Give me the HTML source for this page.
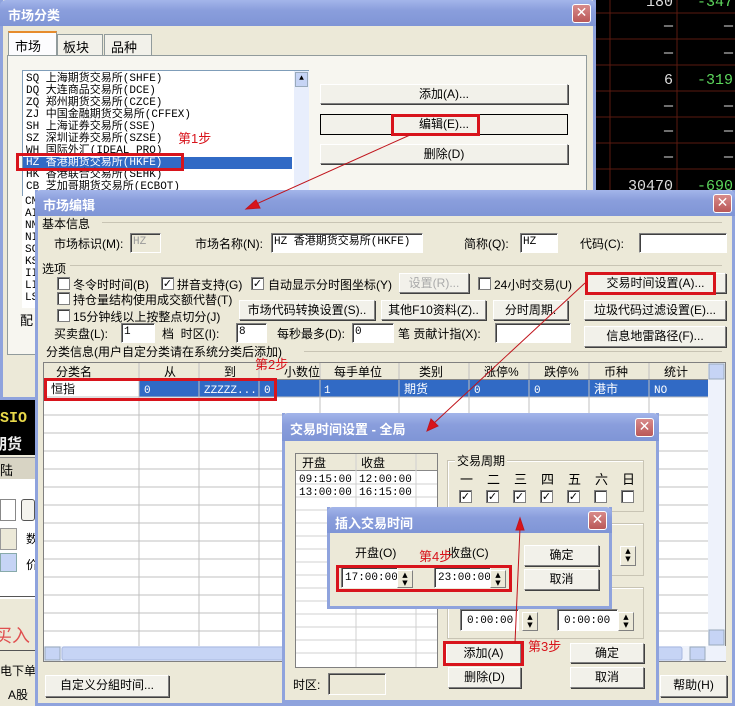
<!DOCTYPE html>
<html><head><meta charset="utf-8"><style>
*{margin:0;padding:0;box-sizing:border-box}
body{width:735px;height:706px;position:relative;overflow:hidden;background:#ece9d8;font:12px "Liberation Sans","Noto Sans CJK SC",sans-serif;color:#000}
.a{position:absolute;white-space:nowrap}
.win{position:absolute;background:#ece9d8;border:3px solid #8fa3dd;border-top:none}
.tb{position:absolute;left:-3px;right:-3px;top:0;height:26px;background:linear-gradient(#a3b5ea,#8a9edc 40%,#7f95d6);color:#fff;font-weight:bold;font-size:13px;padding:5px 8px;border-radius:6px 6px 0 0}
.cl{position:absolute;top:4px;right:5px;width:19px;height:19px;background:linear-gradient(#d88a8a,#b95858);border:1px solid #fff;border-radius:3px;color:#fff;font:bold 14px/17px "DejaVu Sans",sans-serif;text-align:center}
.btn{position:absolute;background:#f2f1ea;border:1px solid #fff;border-right-color:#808080;border-bottom-color:#808080;box-shadow:1px 1px 0 #404040;text-align:center;line-height:18px}
.inp{position:absolute;background:#fff;border:1px solid #808080;border-right-color:#fff;border-bottom-color:#fff;box-shadow:inset 1px 1px 0 #404040;padding-left:2px;line-height:16px;font-family:"Liberation Mono","Noto Sans CJK SC",monospace;font-size:11px}
.cb{position:absolute;width:13px;height:13px;background:#fff;border:1px solid #808080;box-shadow:inset 1px 1px 0 #404040;font:bold 11px/11px "DejaVu Sans";text-align:center}
.red{position:absolute;border:3px solid #d8141c}
.rt{position:absolute;color:#d8141c;font-size:13px;white-space:nowrap}
.grp{position:absolute;border:1px solid #c8c4b4;box-shadow:inset 1px 1px 0 #fff}
.spin{position:absolute;width:16px;background:#ece9d8;border:1px solid #fff;border-right-color:#808080;border-bottom-color:#808080;font:7px/8px "DejaVu Sans";text-align:center}
.d{position:absolute;top:469px;font-size:13px}
</style></head><body>

<div class="a" style="left:595px;top:0;width:140px;height:192px;background:#000"></div>
<svg class="a" style="left:595px;top:0" width="140" height="192">
<g stroke="#5a1a10"><line x1="0" y1="13" x2="140" y2="13"/><line x1="0" y1="39" x2="140" y2="39"/><line x1="0" y1="65" x2="140" y2="65"/><line x1="0" y1="91" x2="140" y2="91"/><line x1="0" y1="117" x2="140" y2="117"/><line x1="0" y1="143" x2="140" y2="143"/><line x1="0" y1="169" x2="140" y2="169"/><line x1="15" y1="0" x2="15" y2="192"/><line x1="82" y1="0" x2="82" y2="192"/></g>
<g font-family="Liberation Mono" font-size="15" text-anchor="end">
<text x="78" y="6" fill="#ddd">180</text><text x="138" y="6" fill="#5cd65c">-347</text>
<text x="78" y="30" fill="#ddd">—</text><text x="138" y="30" fill="#ddd">—</text>
<text x="78" y="57" fill="#ddd">—</text><text x="138" y="57" fill="#ddd">—</text>
<text x="78" y="84" fill="#ddd">6</text><text x="138" y="84" fill="#5cd65c">-319</text>
<text x="78" y="110" fill="#ddd">—</text><text x="138" y="110" fill="#ddd">—</text>
<text x="78" y="135" fill="#ddd">—</text><text x="138" y="135" fill="#ddd">—</text>
<text x="78" y="161" fill="#ddd">—</text><text x="138" y="161" fill="#ddd">—</text>
<text x="78" y="190" fill="#ddd">30470</text><text x="138" y="190" fill="#5cd65c">-690</text></g></svg>

<div class="a" style="left:0;top:383px;width:35px;height:72px;background:#000"></div>
<div class="a" style="left:0;top:385px;color:#e8d84a;font:bold 15px 'Liberation Mono'">SIO</div>
<div class="a" style="left:0;top:410px;color:#e8d84a;font:bold 15px 'Liberation Mono'">SIO</div>
<div class="a" style="left:-8px;top:433px;color:#eee;font-size:15px;font-weight:bold">期货</div>
<div class="a" style="left:0;top:457px;width:35px;height:22px;background:#d8d4c4;border-top:1px solid #888;padding:2px 0;font-size:13px">陆</div>
<div class="a" style="left:0;top:479px;width:35px;height:120px;background:#fff"></div>
<div class="a" style="left:0;top:499px;width:16px;height:22px;border:1px solid #888;background:#fff"></div>
<div class="a" style="left:21px;top:499px;width:14px;height:22px;border:1px solid #555;border-radius:3px;background:#f4f3ee"></div>
<div class="a" style="left:0;top:528px;width:17px;height:22px;background:#ece9d8;border:1px solid #999"></div>
<div class="a" style="left:26px;top:530px">数</div>
<div class="a" style="left:0;top:553px;width:17px;height:19px;background:#c6d4f5;border:1px solid #8aa"></div>
<div class="a" style="left:26px;top:556px">价</div>
<div class="a" style="left:0;top:596px;width:35px;height:1px;background:#555"></div>
<div class="a" style="left:-6px;top:622px;color:#e05050;font-size:18px">买入</div>
<div class="a" style="left:0;top:650px;width:35px;height:1px;background:#555"></div>
<div class="a" style="left:0;top:662px">电下单</div>
<div class="a" style="left:8px;top:686px">A股</div>

<div class="win" style="left:0;top:0;width:596px;height:400px">
 <div class="tb">市场分类<div class="cl">✕</div></div>
</div>
<div class="a" style="left:8px;top:31px;width:49px;height:25px;border:1px solid #919b9c;border-bottom:none;background:#fcfcfe;padding:3px 6px;font-size:13px;border-top:2px solid #e68b2c">市场</div>
<div class="a" style="left:57px;top:34px;width:46px;height:21px;border:1px solid #919b9c;border-bottom:none;padding:2px 5px;font-size:13px;background:#f2f1ea">板块</div>
<div class="a" style="left:104px;top:34px;width:48px;height:21px;border:1px solid #919b9c;border-bottom:none;padding:2px 6px;font-size:13px;background:#f2f1ea">品种</div>
<div class="a" style="left:7px;top:55px;width:580px;height:300px;border:1px solid #919b9c;background:#f7f6f0"></div>
<div class="a" style="left:22px;top:70px;width:287px;height:130px;background:#fff;border:1px solid #7f9db9;font:11px/12px 'Liberation Mono','Noto Sans CJK SC',monospace;padding:2px 0 0 3px">
SQ 上海期货交易所(SHFE)<br>DQ 大连商品交易所(DCE)<br>ZQ 郑州期货交易所(CZCE)<br>ZJ 中国金融期货交易所(CFFEX)<br>SH 上海证券交易所(SSE)<br>SZ 深圳证券交易所(SZSE)<br>WH 国际外汇(IDEAL PRO)<br><span style="display:block;margin-left:-3px;padding-left:3px;width:269px;background:#316ac5;color:#fff">HZ 香港期货交易所(HKFE)</span>HK 香港联合交易所(SEHK)<br>CB 芝加哥期货交易所(ECBOT)
<div class="a" style="left:271px;top:0;width:15px;height:130px;background:#e8eefc"><div style="margin:1px;height:15px;background:#c6d4f5;border:1px solid #9ab;font-size:8px;text-align:center">▲</div></div></div>
<div class="a" style="left:22px;top:196px;width:14px;height:112px;font:11px/12px 'Liberation Mono';background:#fff;padding-left:3px">CM<br>AI<br>NM<br>NI<br>SC<br>KS<br>II<br>LI<br>LS</div>
<div class="a" style="left:20px;top:310px;font-size:13px">配</div>
<div class="red" style="left:16px;top:153px;width:168px;height:18px"></div>
<div class="rt" style="left:178px;top:128px">第1步</div>
<div class="btn" style="left:320px;top:84px;width:248px;height:20px">添加(A)...</div>
<div class="btn" style="left:320px;top:114px;width:248px;height:21px;border:1px solid #000;box-shadow:none">编辑(E)...</div>
<div class="red" style="left:391px;top:114px;width:89px;height:22px"></div>
<div class="btn" style="left:320px;top:144px;width:248px;height:20px">删除(D)</div>

<div class="win" style="left:35px;top:190px;width:700px;height:516px;border-width:3px">
 <div class="tb">市场编辑<div class="cl" style="right:3px">✕</div></div>
</div>
<div class="a" style="left:42px;top:215px">基本信息</div><div class="a" style="left:102px;top:222px;width:620px;height:1px;background:#c8c4b4"></div>
<div class="a" style="left:54px;top:235px">市场标识(M):</div><div class="inp" style="left:130px;top:233px;width:31px;height:20px;background:#ece9d8;color:#999">HZ</div>
<div class="a" style="left:195px;top:235px">市场名称(N):</div><div class="inp" style="left:271px;top:233px;width:152px;height:20px">HZ 香港期货交易所(HKFE)</div>
<div class="a" style="left:464px;top:235px">简称(Q):</div><div class="inp" style="left:520px;top:233px;width:38px;height:20px">HZ</div>
<div class="a" style="left:580px;top:235px">代码(C):</div><div class="inp" style="left:639px;top:233px;width:88px;height:20px"></div>
<div class="a" style="left:42px;top:260px">选项</div><div class="a" style="left:70px;top:265px;width:652px;height:1px;background:#c8c4b4"></div>
<div class="cb" style="left:57px;top:277px"></div><div class="a" style="left:73px;top:276px">冬令时时间(B)</div>
<div class="cb" style="left:161px;top:277px">✓</div><div class="a" style="left:177px;top:276px">拼音支持(G)</div>
<div class="cb" style="left:251px;top:277px">✓</div><div class="a" style="left:268px;top:276px">自动显示分时图坐标(Y)</div>
<div class="btn" style="left:399px;top:273px;width:70px;height:20px;color:#aaa">设置(R)...</div>
<div class="cb" style="left:478px;top:277px"></div><div class="a" style="left:494px;top:276px">24小时交易(U)</div>
<div class="btn" style="left:585px;top:273px;width:141px;height:20px">交易时间设置(A)...</div>
<div class="red" style="left:585px;top:272px;width:131px;height:23px"></div>
<div class="cb" style="left:57px;top:292px"></div><div class="a" style="left:73px;top:291px">持仓量结构使用成交额代替(T)</div>
<div class="cb" style="left:57px;top:309px"></div><div class="a" style="left:73px;top:308px">15分钟线以上按整点切分(J)</div>
<div class="btn" style="left:239px;top:300px;width:136px;height:20px">市场代码转换设置(S)..</div>
<div class="btn" style="left:381px;top:300px;width:105px;height:20px">其他F10资料(Z)..</div>
<div class="btn" style="left:493px;top:300px;width:75px;height:20px">分时周期.</div>
<div class="btn" style="left:584px;top:300px;width:142px;height:20px">垃圾代码过滤设置(E)...</div>
<div class="a" style="left:54px;top:325px">买卖盘(L):</div><div class="inp" style="left:121px;top:323px;width:34px;height:20px">1</div>
<div class="a" style="left:162px;top:325px">档 &nbsp;时区(I):</div><div class="inp" style="left:236px;top:323px;width:31px;height:20px">8</div>
<div class="a" style="left:277px;top:325px">每秒最多(D):</div><div class="inp" style="left:352px;top:323px;width:42px;height:20px">0</div>
<div class="a" style="left:398px;top:325px">笔 贡献计指(X):</div><div class="inp" style="left:495px;top:323px;width:76px;height:20px"></div>
<div class="btn" style="left:584px;top:326px;width:142px;height:21px">信息地雷路径(F)...</div>
<div class="a" style="left:46px;top:343px">分类信息(用户自定分类请在系统分类后添加)</div><div class="a" style="left:304px;top:351px;width:418px;height:1px;background:#c8c4b4"></div>
<div class="a" style="left:43px;top:362px;width:683px;height:300px;background:#fff;border:1px solid #808080"></div>
<svg class="a" style="left:44px;top:363px" width="682" height="298">
<rect x="0" y="0" width="664" height="16" fill="#ece9d8"/>
<rect x="95" y="17" width="569" height="17" fill="#316ac5"/>
<g stroke="#c0c0c0"><line x1="0" y1="34" x2="664" y2="34"/><line x1="0" y1="52" x2="664" y2="52"/><line x1="0" y1="70" x2="664" y2="70"/><line x1="0" y1="88" x2="664" y2="88"/><line x1="0" y1="106" x2="664" y2="106"/><line x1="0" y1="124" x2="664" y2="124"/><line x1="0" y1="142" x2="664" y2="142"/><line x1="0" y1="160" x2="664" y2="160"/><line x1="0" y1="178" x2="664" y2="178"/><line x1="0" y1="196" x2="664" y2="196"/><line x1="0" y1="214" x2="664" y2="214"/><line x1="0" y1="232" x2="664" y2="232"/><line x1="0" y1="250" x2="664" y2="250"/><line x1="0" y1="268" x2="664" y2="268"/>
<line x1="95" y1="0" x2="95" y2="283"/><line x1="155" y1="0" x2="155" y2="283"/><line x1="215" y1="0" x2="215" y2="283"/><line x1="276" y1="0" x2="276" y2="283"/><line x1="355" y1="0" x2="355" y2="283"/><line x1="425" y1="0" x2="425" y2="283"/><line x1="485" y1="0" x2="485" y2="283"/><line x1="545" y1="0" x2="545" y2="283"/><line x1="605" y1="0" x2="605" y2="283"/></g>
<line x1="0" y1="16.5" x2="664" y2="16.5" stroke="#888"/>
<rect x="664" y="0" width="17" height="283" fill="#eef2fb"/><rect x="665" y="1" width="15" height="15" fill="#c6d4f5" stroke="#9ab"/><rect x="665" y="267" width="15" height="15" fill="#c6d4f5" stroke="#9ab"/>
<rect x="0" y="283" width="682" height="15" fill="#eef2fb"/><rect x="1" y="284" width="15" height="13" fill="#c6d4f5" stroke="#9ab"/><rect x="18" y="284" width="620" height="13" fill="#c6d4f5" stroke="#a8b8e0" rx="2"/><rect x="646" y="284" width="15" height="13" fill="#c6d4f5" stroke="#9ab"/>
<g font-size="12" font-family="Liberation Sans,Noto Sans CJK SC"><text x="12" y="13">分类名</text><text x="120" y="13">从</text><text x="180" y="13">到</text><text x="240" y="13">小数位</text><text x="290" y="13">每手单位</text><text x="375" y="13">类别</text><text x="440" y="13">涨停%</text><text x="500" y="13">跌停%</text><text x="560" y="13">币种</text><text x="620" y="13">统计</text>
<text x="7" y="30">恒指</text><g fill="#fff" font-family="Liberation Mono" font-size="11"><text x="100" y="30">0</text><text x="160" y="30">ZZZZZ...</text><text x="220" y="30">0</text><text x="280" y="30">1</text><text x="360" y="30" font-family="Noto Sans CJK SC" font-size="12">期货</text><text x="430" y="30">0</text><text x="490" y="30">0</text><text x="550" y="30" font-family="Noto Sans CJK SC" font-size="12">港市</text><text x="610" y="30">NO</text></g></g>
</svg>
<div class="red" style="left:44px;top:378px;width:233px;height:23px"></div>
<div class="rt" style="left:255px;top:354px">第2步</div>
<div class="btn" style="left:45px;top:675px;width:124px;height:22px">自定义分組时间...</div>
<div class="btn" style="left:660px;top:675px;width:67px;height:22px">帮助(H)</div>

<div class="win" style="left:282px;top:413px;width:377px;height:290px">
 <div class="tb" style="height:28px;padding-top:6px">交易时间设置 - 全局<div class="cl" style="top:5px">✕</div></div>
</div>
<div class="a" style="left:295px;top:453px;width:143px;height:215px;background:#fff;border:1px solid #808080"></div>
<svg class="a" style="left:296px;top:454px" width="141" height="213"><rect width="141" height="16" fill="#ece9d8"/><line x1="0" y1="16.5" x2="141" y2="16.5" stroke="#888"/><g stroke="#d0d0d0"><line x1="0" y1="30" x2="141" y2="30"/><line x1="0" y1="43" x2="141" y2="43"/><line x1="0" y1="56" x2="141" y2="56"/><line x1="0" y1="69" x2="141" y2="69"/><line x1="0" y1="82" x2="141" y2="82"/><line x1="0" y1="95" x2="141" y2="95"/><line x1="0" y1="108" x2="141" y2="108"/><line x1="0" y1="121" x2="141" y2="121"/><line x1="0" y1="134" x2="141" y2="134"/><line x1="0" y1="147" x2="141" y2="147"/><line x1="0" y1="160" x2="141" y2="160"/><line x1="0" y1="173" x2="141" y2="173"/><line x1="0" y1="186" x2="141" y2="186"/><line x1="0" y1="199" x2="141" y2="199"/><line x1="60" y1="0" x2="60" y2="213"/><line x1="120" y1="0" x2="120" y2="213"/></g>
<g font-size="12"><text x="6" y="13">开盘</text><text x="65" y="13">收盘</text></g><g font-family="Liberation Mono" font-size="11"><text x="3" y="28">09:15:00</text><text x="63" y="28">12:00:00</text><text x="3" y="41">13:00:00</text><text x="63" y="41">16:15:00</text></g></svg>
<div class="grp" style="left:447px;top:460px;width:197px;height:52px"></div><div class="a" style="left:455px;top:452px;background:#ece9d8;padding:0 2px">交易周期</div>
<div class="d" style="left:460px">一</div><div class="d" style="left:487px">二</div><div class="d" style="left:514px">三</div><div class="d" style="left:541px">四</div><div class="d" style="left:568px">五</div><div class="d" style="left:595px">六</div><div class="d" style="left:622px">日</div>
<div class="cb" style="left:459px;top:490px">✓</div><div class="cb" style="left:486px;top:490px">✓</div><div class="cb" style="left:513px;top:490px">✓</div><div class="cb" style="left:540px;top:490px">✓</div><div class="cb" style="left:567px;top:490px">✓</div><div class="cb" style="left:594px;top:490px"></div><div class="cb" style="left:621px;top:490px"></div>
<div class="grp" style="left:447px;top:523px;width:197px;height:53px"></div>
<div class="spin" style="left:620px;top:546px;height:20px">▲<br>▼</div>
<div class="grp" style="left:447px;top:587px;width:197px;height:52px"></div>
<div class="inp" style="left:460px;top:609px;width:59px;height:22px;padding:3px 6px">0:00:00</div><div class="spin" style="left:522px;top:612px;height:19px">▲<br>▼</div>
<div class="inp" style="left:557px;top:609px;width:61px;height:22px;padding:3px 6px">0:00:00</div><div class="spin" style="left:618px;top:612px;height:19px">▲<br>▼</div>
<div class="btn" style="left:446px;top:643px;width:75px;height:21px">添加(A)</div>
<div class="red" style="left:443px;top:641px;width:81px;height:25px"></div>
<div class="btn" style="left:448px;top:667px;width:73px;height:21px">删除(D)</div>
<div class="btn" style="left:570px;top:643px;width:74px;height:20px">确定</div>
<div class="btn" style="left:570px;top:667px;width:74px;height:21px">取消</div>
<div class="rt" style="left:528px;top:636px">第3步</div>
<div class="a" style="left:293px;top:676px">时区:</div><div class="inp" style="left:328px;top:673px;width:58px;height:22px;background:#ece9d8"></div>

<div class="win" style="left:327px;top:507px;width:285px;height:102px">
 <div class="tb" style="padding-top:6px">插入交易时间<div class="cl" style="top:4px">✕</div></div>
</div>
<div class="a" style="left:355px;top:544px">开盘(O)</div><div class="a" style="left:448px;top:544px">收盘(C)</div>
<div class="rt" style="left:419px;top:546px">第4步</div>
<div class="inp" style="left:341px;top:567px;width:57px;height:21px;padding:2px 3px">17:00:00</div><div class="spin" style="left:397px;top:570px;height:18px">▲<br>▼</div>
<div class="inp" style="left:434px;top:567px;width:57px;height:21px;padding:2px 3px">23:00:00</div><div class="spin" style="left:490px;top:570px;height:18px">▲<br>▼</div>
<div class="red" style="left:336px;top:565px;width:176px;height:27px"></div>
<div class="btn" style="left:524px;top:545px;width:75px;height:21px">确定</div>
<div class="btn" style="left:524px;top:569px;width:75px;height:21px">取消</div>

<svg class="a" style="left:0;top:0" width="735" height="706">
<g stroke="#c0141c" stroke-width="1" fill="#d8141c">
<line x1="410" y1="135" x2="254" y2="205"/><polygon points="246,209 256,200 260,208"/>
<line x1="585" y1="283" x2="433" y2="424"/><polygon points="427,431 431,419 438,426"/>
<line x1="515" y1="643" x2="520" y2="528"/><polygon points="520,518 516,530 524,530"/>
</g></svg>
</body></html>
